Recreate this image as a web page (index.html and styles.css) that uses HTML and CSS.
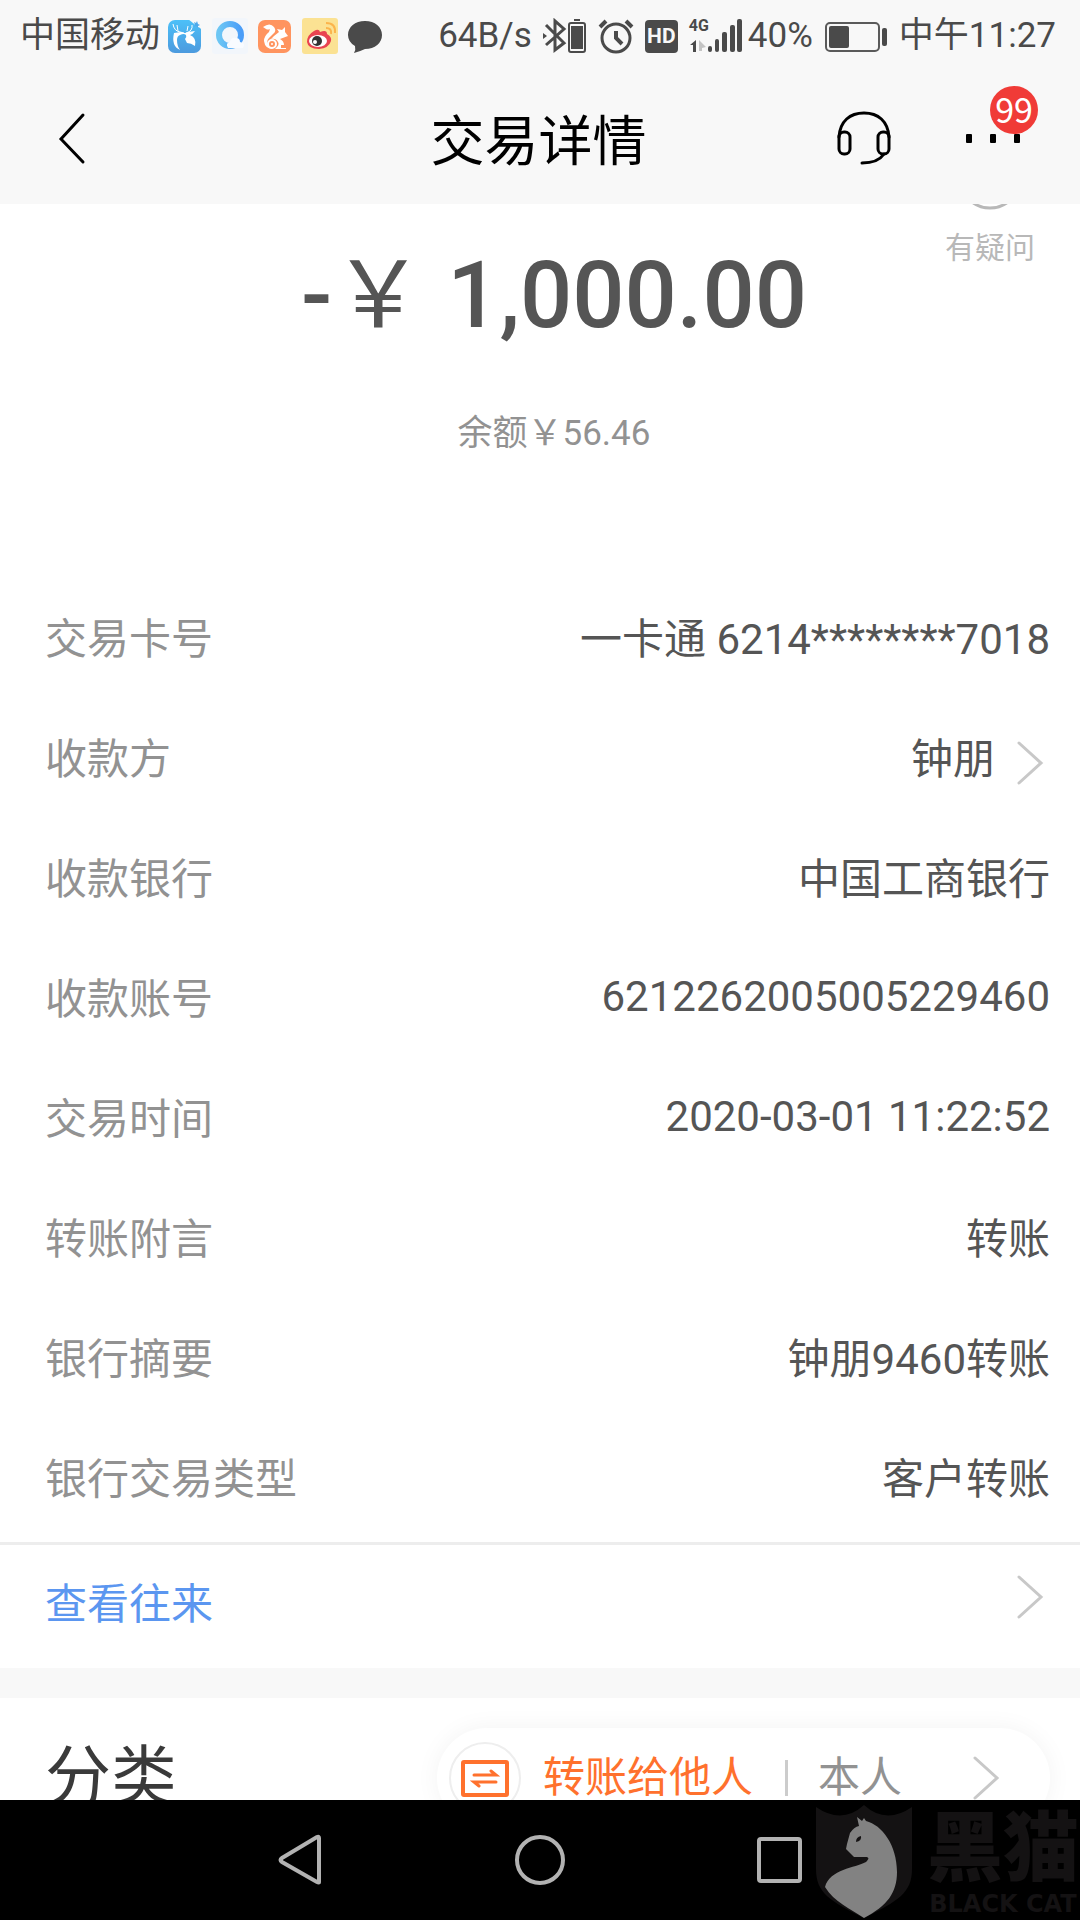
FILE: index.html
```html
<!DOCTYPE html>
<html lang="zh-CN">
<head>
    <meta charset="UTF-8">
    <meta name="viewport" content="width=device-width, initial-scale=1.0">
    <title>交易详情</title>
    <link rel="stylesheet" href="styles.css">
</head>
<body>
    <div class="status-bar">
        <div class="status-left">
            <span>中国移动</span>
            <svg class="app-icon" viewBox="0 0 36 36">
                <defs>
                    <linearGradient id="blueBg" x1="0" y1="0" x2="0" y2="1"><stop offset="0" stop-color="#4cc0f8"/><stop offset="1" stop-color="#4c9ade"/></linearGradient>
                </defs>
                <rect x="1" y="2" width="33" height="33" rx="7" fill="url(#blueBg)"/>
                <path d="M21 1h14v14q0-5-4-6z" fill="#f8f8f8"/>
                <path d="M27 4l2 1 1-2 1 3 2 1-2 1v2l-2-2-2 1 1-2z" fill="#4fa9ea"/>
                <path d="M6 6q1 7 7 8l4 1M10 7l1 6M25 7q1 6-6 8M21 8l-1 5" fill="none" stroke="#fff" stroke-width="1"/>
                <path d="M7 15l7-1q4 2 7 0l7-1q-2 3-5 4 7 3 5 11-4-3-8-3l-2-4q2-2 1-4-2-2-6 0-3 1-3 5 0 6 3 10-9-4-6-17z" fill="#fff"/>
            </svg>
            <svg class="app-icon" viewBox="0 0 36 36">
                <defs>
                    <linearGradient id="ring" x1="0" y1="0" x2="1" y2="0"><stop offset="0" stop-color="#6cc6f4"/><stop offset="1" stop-color="#4a9df8"/></linearGradient>
                </defs>
                <rect width="36" height="36" rx="3" fill="#f2f6fb"/>
                <circle cx="18" cy="17" r="11" fill="none" stroke="url(#ring)" stroke-width="6"/>
                <path d="M16 30q-3-5 2-6 1-5 6-4 4 0 4 4 6 1 3 6z" fill="#f8fbff"/>
            </svg>
            <svg class="app-icon" viewBox="0 0 36 36">
                <rect x="1" y="2" width="33" height="33" rx="7" fill="#ff945f"/>
                <path d="M6 9q7-5 11 0 3 4-1 7l-4 4q-3 3-1 7l5 4q-8 0-9-8 0-5 5-9l1-3q-2 1-4 0zM17 18l5-4-2-3 5 1 3-3v5l3 4-8 3q4 2 4 6h-3v3h5v1h-11q5-4 3-7-2-4-7-3z" fill="#fff"/>
                <circle cx="15" cy="26" r="4" fill="#ff945f" stroke="#fff" stroke-width="2"/>
                <circle cx="15" cy="26" r="1" fill="#fff"/>
            </svg>
            <svg class="app-icon" viewBox="0 0 36 36">
                <rect width="36" height="36" rx="3" fill="#fbe293"/>
                <path d="M5 24q0-7 7-11 5-3 6 1 7-3 7 2 5 3 4 7-2 7-12 8-11 0-12-7z" fill="#e94350"/>
                <ellipse cx="16" cy="23" rx="9" ry="6" fill="#fff"/>
                <circle cx="15" cy="23" r="5" fill="#333"/>
                <circle cx="13" cy="24" r="2" fill="#fff"/>
                <path d="M24 10q6 0 5 6M24 5q10 0 9 10" fill="none" stroke="#fbb44c" stroke-width="2"/>
            </svg>
            <svg class="app-icon" viewBox="0 0 36 36">
                <path d="M18 3c10 0 17 6 17 14s-7 14-17 14q-4 2-11 4 2-3 1-7-7-4-7-11C1 9 8 3 18 3z" fill="#4a4a4a"/>
            </svg>
        </div>
        <div class="status-right">
            <span>64B/s</span>
            <svg class="icon-bluetooth" viewBox="0 0 44 36" fill="none" stroke="#4a4a4a" stroke-width="3">
                <path d="M3 7l18 18-9 7V3l9 8L3 27"/>
                <path d="M0 15l4 3-4 3z" fill="#4a4a4a" stroke="none"/>
                <rect x="26" y="5" width="16" height="29" rx="2" stroke-width="2"/>
                <path d="M28 8h12v23H28zM31 1h6v2h-6z" fill="#4a4a4a" stroke="none"/>
            </svg>
            <svg class="app-icon" viewBox="0 0 36 36" fill="none" stroke="#4a4a4a" stroke-width="3">
                <circle cx="18" cy="20" r="14"/>
                <path d="M18 13v7l6 6" stroke-width="4"/>
                <path d="M2 9l6-6M28 3l6 6" stroke-width="4"/>
            </svg>
            <span class="hd">HD</span>
            <div class="signal">
                <span class="signal-type">4G</span>
                <svg viewBox="0 0 54 36" fill="#4a4a4a">
                    <path d="M7 22v12H4v-7H1z"/>
                    <path d="M10 22l7 7-4 1v3h-3z" fill="#c4c4c4"/>
                    <rect x="19" y="28" width="4" height="6" rx="2"/>
                    <rect x="26" y="21" width="4" height="13" rx="2"/>
                    <rect x="33" y="14" width="5" height="20" rx="2"/>
                    <rect x="41" y="7" width="5" height="27" rx="2"/>
                    <rect x="48" y="1" width="5" height="33" rx="2"/>
                </svg>
            </div>
            <span>40%</span>
            <svg class="icon-battery" viewBox="0 0 64 36">
                <rect x="2" y="5" width="53" height="28" rx="4" fill="none" stroke="#5a5a5a" stroke-width="2"/>
                <rect x="5" y="8" width="20" height="22" rx="2" fill="#4a4a4a"/>
                <rect x="58" y="10" width="5" height="18" rx="2" fill="#4a4a4a"/>
            </svg>
            <span>中午11:27</span>
        </div>
    </div>

    <header class="header">
        <button type="button" class="icon-btn back" aria-label="返回">
            <svg viewBox="0 0 30 54" fill="none" stroke="#000" stroke-width="3" stroke-linecap="round"><path d="M26 4L4 28l22 23"/></svg>
        </button>
        <h1>交易详情</h1>
        <div class="header-actions">
            <button type="button" class="icon-btn service" aria-label="客服">
                <svg viewBox="0 0 54 54" fill="none" stroke="#000" stroke-width="3" stroke-linecap="round">
                    <path d="M2 26C3 10 13 2 27 2s24 8 25 24"/>
                    <rect x="2" y="21" width="11" height="22" rx="5"/>
                    <rect x="41" y="21" width="11" height="22" rx="5"/>
                    <path d="M47 43q-6 9-22 9"/>
                </svg>
            </button>
            <button type="button" class="icon-btn more" aria-label="更多">
                <i></i><i></i><i></i>
                <span class="badge">99</span>
            </button>
        </div>
    </header>

    <main class="content">
        <section class="summary">
            <a href="#" class="question">
                <svg viewBox="0 0 64 64" fill="none" stroke="#b8b8b8" stroke-width="3"><circle cx="32" cy="32" r="30"/></svg>
                有疑问
            </a>
            <p class="amount">-<span class="yen">￥</span> 1,000.00</p>
            <p class="balance">余额￥56.46</p>
        </section>

        <dl class="details">
            <div class="row"><dt>交易卡号</dt><dd>一卡通 6214********7018</dd></div>
            <div class="row">
                <dt>收款方</dt>
                <dd><a href="#" class="payee">钟朋
                    <svg class="arrow" viewBox="0 0 28 44"><path d="M3 2l22 20L3 42"/></svg></a></dd>
            </div>
            <div class="row"><dt>收款银行</dt><dd>中国工商银行</dd></div>
            <div class="row"><dt>收款账号</dt><dd class="number">6212262005005229460</dd></div>
            <div class="row"><dt>交易时间</dt><dd class="number">2020-03-01 11:22:52</dd></div>
            <div class="row"><dt>转账附言</dt><dd>转账</dd></div>
            <div class="row"><dt>银行摘要</dt><dd>钟朋9460转账</dd></div>
            <div class="row"><dt>银行交易类型</dt><dd>客户转账</dd></div>
        </dl>

        <a href="#" class="history">
            <span>查看往来</span>
            <svg class="arrow" viewBox="0 0 28 44"><path d="M3 2l22 20L3 42"/></svg>
        </a>

        <section class="category">
            <h2>分类</h2>
            <button type="button" class="category-pill">
                <span class="category-icon">
                    <svg viewBox="0 0 48 38" fill="none" stroke="#ff712d" stroke-width="4">
                        <rect x="2" y="3" width="44" height="33" rx="1"/>
                        <path d="M13 16h22l-5-4M35 23H13l5 4" stroke-width="3" stroke-linecap="round"/>
                    </svg>
                </span>
                <span class="category-name">转账给他人</span>
                <span class="divider"></span>
                <span class="category-owner">本人</span>
                <svg class="arrow" viewBox="0 0 28 44"><path d="M3 2l22 20L3 42"/></svg>
            </button>
        </section>
    </main>

    <nav class="nav-bar">
        <button type="button" class="icon-btn" aria-label="后退">
            <svg viewBox="0 0 52 52"><path d="M45 4v44q0 1-2 0L8 28q-3-2 0-4L43 3q2-1 2 1z"/></svg>
        </button>
        <button type="button" class="icon-btn" aria-label="主页">
            <svg viewBox="0 0 52 52"><circle cx="26" cy="26" r="23"/></svg>
        </button>
        <button type="button" class="icon-btn" aria-label="最近任务">
            <svg viewBox="0 0 52 52"><rect x="5" y="5" width="41" height="42" rx="2"/></svg>
        </button>
        <div class="watermark">
            <svg viewBox="0 0 98 116">
                <path d="M1 3q26 18 48-2 22 20 48 2v62c0 24-14 32-48 49C15 97 1 89 1 65z" fill="#141213"/>
                <path d="M42 13l5 4 2-3 2 3c16 4 31 24 31 51 0 21-10 34-33 46C36 105 19 98 10 83c5-18 30-19 41-25 3-3 3-4 1-5H39l-8-8 1-5 3-11q4-6 9-7z" fill="#828282"/>
                <path d="M41 38q0-5 5-6 1 5-5 6z" fill="#141213"/>
            </svg>
            <div class="watermark-text">
                <span>黑猫</span>
                <small>BLACK CAT</small>
            </div>
        </div>
    </nav>
</body>
</html>
```

FILE: styles.css
```css
* {
    box-sizing: border-box;
}
body {
    display: flex;
    flex-direction: column;
    height: 100vh;
    margin: 0;
    overflow: hidden;
    background: #fff;
    color: #555;
    font-family: Roboto, "Noto Sans CJK SC", sans-serif;
    font-size: 42px;
}
h1, h2, p, dl, dd {
    margin: 0;
    font-weight: normal;
}
a {
    color: inherit;
    text-decoration: none;
}
button {
    border: none;
    background: none;
    padding: 0;
    font: inherit;
    color: inherit;
    cursor: pointer;
}
svg {
    display: block;
    flex: none;
}

/* status bar */
.status-bar {
    flex: none;
    display: flex;
    justify-content: space-between;
    height: 72px;
    padding: 0 24px 0 20px;
    background: #f8f8f8;
    color: #4a4a4a;
    font-size: 35px;
    line-height: 76px;
    white-space: nowrap;
}
.status-left,
.status-right {
    display: flex;
    align-items: center;
}
.status-left {
    gap: 9px;
}
.status-right {
    gap: 11px;
}
.app-icon {
    width: 36px;
    height: 36px;
}
.status-left span {
    margin-right: -2px;
}
.icon-bluetooth {
    width: 44px;
    height: 36px;
}
.hd {
    width: 33px;
    height: 33px;
    border-radius: 4px;
    background: #4a4a4a;
    color: #f8f8f8;
    font-size: 21px;
    font-weight: bold;
    line-height: 33px;
    text-align: center;
}
.signal {
    position: relative;
    margin-right: -6px;
}
.signal svg {
    width: 54px;
    height: 36px;
}
.signal-type {
    position: absolute;
    top: 0;
    left: 0;
    font-size: 16px;
    font-weight: bold;
    line-height: 16px;
}
.icon-battery {
    width: 64px;
    height: 36px;
}

/* title bar */
.header {
    flex: none;
    display: grid;
    grid-template-columns: 1fr auto 1fr;
    align-items: center;
    height: 132px;
    padding: 0 60px 0 57px;
    background: #f8f8f8;
    color: #000;
}
.header h1 {
    padding-top: 10px;
    font-size: 54px;
    line-height: 72px;
}
.header-actions {
    display: flex;
    justify-content: flex-end;
    align-items: center;
    gap: 75px;
}
.back svg {
    width: 30px;
    height: 54px;
}
.service svg {
    width: 54px;
    height: 54px;
}
.more {
    position: relative;
    display: flex;
    gap: 18px;
}
.more i {
    width: 6px;
    height: 9px;
    border-radius: 1px;
    background: #000;
}
.badge {
    position: absolute;
    right: -18px;
    bottom: 9px;
    width: 48px;
    height: 48px;
    border-radius: 50%;
    background: #f03b37;
    color: #fff;
    font-family: "Noto Sans CJK SC", sans-serif;
    font-size: 34px;
    line-height: 46px;
    text-align: center;
}

/* scrolled content */
.content {
    flex: 1;
    min-height: 0;
    overflow: hidden;
}
.summary {
    position: relative;
    height: 378px;
    padding-top: 36px;
    text-align: center;
}
.question {
    position: absolute;
    top: -58px;
    right: 45px;
    display: flex;
    flex-direction: column;
    align-items: center;
    gap: 16px;
    color: #b8b8b8;
    font-size: 30px;
    line-height: 44px;
}
.question svg {
    width: 64px;
    height: 64px;
}
.amount {
    padding-left: 28px;
    font-size: 92px;
    font-weight: 500;
    line-height: 112px;
}
.yen {
    font-weight: 400;
}
.balance {
    margin-top: 56px;
    padding-left: 28px;
    color: #929292;
    font-size: 35px;
    line-height: 52px;
}
.row {
    display: flex;
    justify-content: space-between;
    align-items: center;
    height: 120px;
    padding: 0 30px 4px 45px;
    line-height: 60px;
}
.row dt {
    color: #929292;
}
.number {
    padding-bottom: 6px;
}
.payee {
    display: flex;
    align-items: center;
    gap: 21px;
    padding-right: 6px;
}
.payee .arrow {
    margin-top: 6px;
}
.arrow {
    width: 28px;
    height: 44px;
    fill: none;
    stroke: #c8c8c8;
    stroke-width: 3;
    stroke-linecap: round;
}
.history {
    display: flex;
    justify-content: space-between;
    align-items: flex-start;
    height: 126px;
    padding: 30px 36px 0 45px;
    border-top: 3px solid #ededed;
    color: #5b96f0;
    line-height: 60px;
}

/* category */
.category {
    display: flex;
    justify-content: space-between;
    align-items: center;
    padding: 30px 30px 30px 45px;
    border-top: 30px solid #f8f8f8;
}
.category h2 {
    color: #3a3a3a;
    font-size: 66px;
    line-height: 90px;
}
.category-pill {
    display: flex;
    align-items: center;
    height: 100px;
    padding: 0 50px 0 12px;
    border-radius: 50px;
    box-shadow: 0 0 24px rgba(0, 0, 0, 0.05);
}
.category-icon {
    display: grid;
    place-items: center;
    width: 72px;
    height: 72px;
    margin-right: 22px;
    border: 2px solid #eee;
    border-radius: 50%;
}
.category-icon svg {
    width: 48px;
    height: 38px;
}
.category-name,
.category-owner {
    padding-bottom: 10px;
}
.category-name {
    color: #ff712d;
}
.divider {
    width: 3px;
    height: 36px;
    margin: 0 30px 0 32px;
    background: #ccc;
}
.category-owner {
    margin-right: 70px;
    color: #929292;
}

/* system navigation */
.nav-bar {
    position: relative;
    flex: none;
    display: flex;
    justify-content: center;
    align-items: center;
    gap: 188px;
    height: 120px;
    background: #000;
}
.nav-bar .icon-btn svg {
    width: 52px;
    height: 52px;
    fill: none;
    stroke: #b2b2b2;
    stroke-width: 4;
}
.watermark {
    position: absolute;
    right: 1px;
    bottom: 0;
    display: flex;
    align-items: center;
    gap: 14px;
    color: #141213;
}
.watermark svg {
    width: 98px;
    height: 116px;
}
.watermark-text {
    display: flex;
    flex-direction: column;
    align-items: center;
    font-weight: 900;
}
.watermark-text span {
    font-size: 76px;
    line-height: 84px;
}
.watermark-text small {
    font-family: "DejaVu Sans", sans-serif;
    font-size: 24px;
    line-height: 26px;
}
```
